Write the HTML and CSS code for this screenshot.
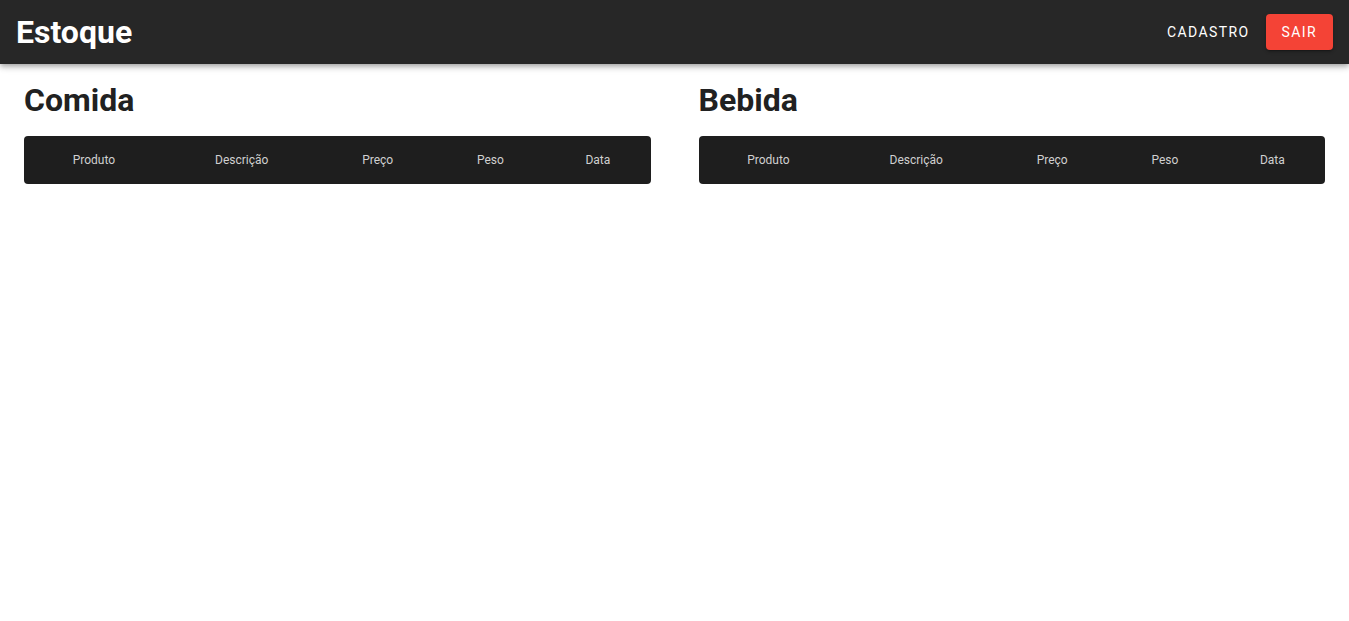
FILE: index.html
```html
<!DOCTYPE html>
<html lang="pt">
<head>
<meta charset="utf-8">
<title>Estoque</title>
<link rel="stylesheet" href="styles.css">
</head>
<body>
<header class="app-bar">
  <div class="brand">Estoque</div>
  <nav class="actions">
    <a class="btn btn-text" href="#">Cadastro</a>
    <a class="btn btn-red" href="#">Sair</a>
  </nav>
</header>
<main class="content">
  <section class="panel">
    <h2 class="panel-title">Comida</h2>
    <div class="table-wrap">
      <table class="data-table">
        <colgroup><col class="c1"><col class="c2"><col class="c3"><col class="c4"><col class="c5"></colgroup>
        <thead><tr><th>Produto</th><th>Descrição</th><th>Preço</th><th>Peso</th><th>Data</th></tr></thead>
      </table>
    </div>
  </section>
  <section class="panel">
    <h2 class="panel-title">Bebida</h2>
    <div class="table-wrap">
      <table class="data-table">
        <colgroup><col class="c1"><col class="c2"><col class="c3"><col class="c4"><col class="c5"></colgroup>
        <thead><tr><th>Produto</th><th>Descrição</th><th>Preço</th><th>Peso</th><th>Data</th></tr></thead>
      </table>
    </div>
  </section>
</main>
</body>
</html>
```
FILE: styles.css
```css
* { box-sizing: border-box; }
html, body { margin: 0; padding: 0; background: #fff; }
body { font-family: Roboto, "Liberation Sans", sans-serif; color: rgba(0,0,0,0.87); }

.app-bar {
  height: 64px;
  background: #272727;
  display: flex;
  align-items: center;
  justify-content: space-between;
  padding: 0 16px;
  box-shadow: 0 2px 4px -1px rgba(0,0,0,.2), 0 4px 5px 0 rgba(0,0,0,.14), 0 1px 10px 0 rgba(0,0,0,.12);
  position: relative;
  z-index: 2;
}
.brand {
  color: #fff;
  font-size: 32px;
  font-weight: 700;
  letter-spacing: 0;
}
.actions { display: flex; align-items: center; }
.btn {
  display: inline-flex;
  align-items: center;
  justify-content: center;
  height: 36px;
  padding: 0 16px;
  border-radius: 4px;
  font-size: 14px;
  font-weight: 400;
  letter-spacing: 1.4px;
  text-transform: uppercase;
  text-decoration: none;
  color: #fff;
}
.btn-red {
  background: #f44336;
  box-shadow: 0 3px 1px -2px rgba(0,0,0,.2), 0 2px 2px 0 rgba(0,0,0,.14), 0 1px 5px 0 rgba(0,0,0,.12);
}

.content {
  display: grid;
  grid-template-columns: 1fr 1fr;
  column-gap: 48px;
  padding: 16px 24px;
}
.panel-title {
  margin: 0 0 16px;
  font-size: 32px;
  font-weight: 700;
  line-height: 40px;
  color: #212121;
}
.table-wrap {
  background: #1e1e1e;
  border-radius: 4px;
  overflow: hidden;
}
.data-table {
  width: 100%;
  border-collapse: collapse;
  table-layout: fixed;
}
.data-table col.c1 { width: 22.3%; }
.data-table col.c2 { width: 24.9%; }
.data-table col.c3 { width: 18.5%; }
.data-table col.c4 { width: 17.5%; }
.data-table col.c5 { width: 16.8%; }
.data-table th {
  height: 48px;
  padding: 0 16px;
  font-size: 12px;
  font-weight: 400;
  color: #d0d0d0;
  text-align: center;
  white-space: nowrap;
}
```
